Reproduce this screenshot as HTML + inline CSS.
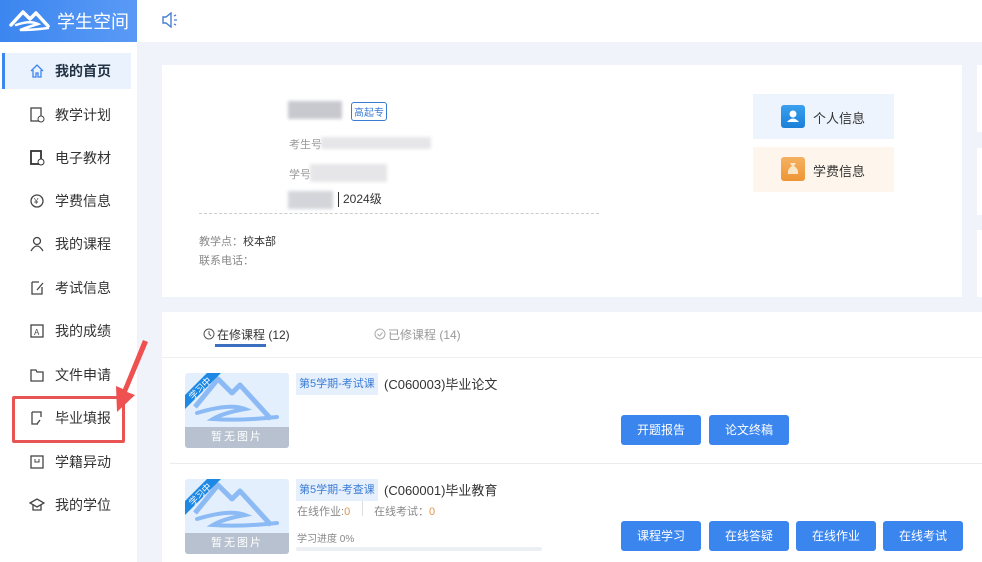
<!DOCTYPE html>
<html><head><meta charset="utf-8"><style>
*{margin:0;padding:0;box-sizing:border-box}
body{width:982px;height:562px;overflow:hidden;background:#f0f4fa;font-family:"Liberation Sans","Noto Sans CJK SC",sans-serif;position:relative;color:#333}
.abs{position:absolute}
.logo{left:0;top:0;width:137px;height:42px;background:linear-gradient(90deg,#3c86f0,#5a9af5);color:#fff;font-size:18px}
.top{left:137px;top:0;width:845px;height:42px;background:#fff}
.side{left:0;top:42px;width:137px;height:520px;background:#fff}
.nav{position:absolute;left:2px;width:129px;height:36px;font-size:14px;color:#333;display:flex;align-items:center}
.nav svg{position:absolute;left:27px;top:10px}
.nav span{position:absolute;left:53px;top:8px}
.nav.act{background:#eaf2fe;border-left:3px solid #3c86f0;color:#234;font-weight:bold}
.nav.act svg{left:24px}.nav.act span{left:50px}
.card{background:#fff}
.btn{position:absolute;width:80px;height:30px;background:#3a85ee;color:#fff;font-size:12px;border-radius:3px;text-align:center;line-height:30px}
.blur{background:#c8c9cf;filter:blur(1.5px)}
.thumb{position:absolute;width:104px;height:75px;background:#e3effd;border-radius:3px;overflow:hidden}
.thumb .ft{position:absolute;left:0;bottom:0;width:100%;height:21px;background:#b7c1cf;color:#fff;font-size:11px;text-align:center;line-height:21px;letter-spacing:2px}
.tag{position:absolute;background:#e6f0fd;color:#3a7bd5;font-size:11px;padding:0 3px;height:22px;line-height:22px}
.ttl{position:absolute;font-size:13px;color:#333}
.sm{position:absolute;font-size:11px;color:#888}
</style></head><body>
<div class="abs logo">
<svg class="abs" style="left:8px;top:7px" width="44" height="26" viewBox="0 0 44 26"><path d="M3 18 L15 5 L22 12 L28 6 L40 19" fill="none" stroke="#fff" stroke-width="3.5" stroke-linejoin="round" stroke-linecap="round"/><path d="M8 18 Q22 13 30 17 Q20 20 12 23 Q26 23 40 21" fill="none" stroke="#fff" stroke-width="2.5" stroke-linecap="round"/></svg>
<span class="abs" style="left:57px;top:8px">学生空间</span></div>
<div class="abs top"><svg class="abs" style="left:25px;top:12px" width="18" height="16" viewBox="0 0 18 16"><path d="M1 5h3l5-4v14l-5-4H1z" fill="none" stroke="#4a7fd0" stroke-width="1.4"/><path d="M12 4l2-1M12 8h3M12 12l2 1" stroke="#4a7fd0" stroke-width="1.3"/></svg></div>
<div class="abs side">
<div class="nav act" style="top:11px"><svg width="16" height="16" viewBox="0 0 16 16"><path d="M2 8L8 2l6 6M4 7v7h3v-4h2v4h3V7" fill="none" stroke="#3c86f0" stroke-width="1.3"/></svg><span>我的首页</span></div>
<div class="nav" style="top:55px"><svg width="16" height="16"><rect x="2" y="1" width="10" height="13" fill="none" stroke="#444" stroke-width="1.3"/><circle cx="12" cy="12" r="3" fill="#fff" stroke="#444"/></svg><span>教学计划</span></div>
<div class="nav" style="top:98px"><svg width="16" height="16"><rect x="2" y="1" width="10" height="13" fill="none" stroke="#333" stroke-width="1.8"/><circle cx="12" cy="12" r="3" fill="#fff" stroke="#333"/></svg><span>电子教材</span></div>
<div class="nav" style="top:141px"><svg width="16" height="16"><circle cx="8" cy="8" r="6" fill="none" stroke="#444" stroke-width="1.3"/><text x="5" y="11" font-size="8" fill="#444">¥</text></svg><span>学费信息</span></div>
<div class="nav" style="top:184px"><svg width="16" height="16"><circle cx="8" cy="5" r="3.5" fill="none" stroke="#444" stroke-width="1.3"/><path d="M2 15q6-10 12 0" fill="none" stroke="#444" stroke-width="1.3"/></svg><span>我的课程</span></div>
<div class="nav" style="top:228px"><svg width="16" height="16"><path d="M3 2h7M3 2v12h10V7M8 10l6-7" fill="none" stroke="#444" stroke-width="1.3"/></svg><span>考试信息</span></div>
<div class="nav" style="top:271px"><svg width="16" height="16"><rect x="2" y="2" width="12" height="12" fill="none" stroke="#444" stroke-width="1.3"/><text x="5" y="12" font-size="8" fill="#444">A</text></svg><span>我的成绩</span></div>
<div class="nav" style="top:315px"><svg width="16" height="16"><path d="M2 3h5l1 2h6v9H2z" fill="none" stroke="#444" stroke-width="1.3"/></svg><span>文件申请</span></div>
<div class="nav" style="top:358px"><svg width="16" height="16"><path d="M3 2h9v5M3 2v12h6M11 10l-3 4" fill="none" stroke="#444" stroke-width="1.3"/></svg><span>毕业填报</span></div>
<div class="nav" style="top:402px"><svg width="16" height="16"><rect x="2" y="2" width="12" height="12" fill="none" stroke="#444" stroke-width="1.3"/><path d="M6 5v3h4V5" fill="none" stroke="#444"/></svg><span>学籍异动</span></div>
<div class="nav" style="top:445px"><svg width="16" height="16"><path d="M1 6l7-4 7 4-7 4zM4 8v5h8V8" fill="none" stroke="#444" stroke-width="1.3"/></svg><span>我的学位</span></div>
</div>
<div class="abs" style="left:12px;top:396px;width:113px;height:47px;border:3px solid #e85454;border-radius:2px"></div>
<svg class="abs" style="left:105px;top:340px" width="50" height="80"><path d="M43 2 L22 52 L30 55 L12 72 L11 46 L18 49 L38 0Z" fill="#ef5050"/></svg>

<div class="abs card" style="left:162px;top:65px;width:800px;height:232px"></div>
<div class="abs blur" style="left:288px;top:101px;width:54px;height:18px"></div>
<div class="abs" style="left:351px;top:102px;border:1px solid #3a7bd5;color:#3a7bd5;font-size:10px;padding:1px 2px;border-radius:3px">高起专</div>
<div class="abs" style="left:289px;top:136px;font-size:11px;color:#999">考生号</div>
<div class="abs blur" style="left:321px;top:137px;width:110px;height:12px;background:#e6e6e8"></div>
<div class="abs" style="left:289px;top:166px;font-size:11px;color:#999">学号</div>
<div class="abs blur" style="left:310px;top:164px;width:77px;height:18px;background:#e6e6e8"></div>
<div class="abs blur" style="left:288px;top:191px;width:45px;height:18px;background:#d4d5da"></div>
<div class="abs" style="left:338px;top:192px;font-size:12px;color:#333;border-left:1px solid #333;padding-left:4px;line-height:15px">2024级</div>
<div class="abs" style="left:199px;top:213px;width:400px;border-top:1px dashed #ccc"></div>
<div class="abs" style="left:199px;top:233px;font-size:11px;color:#888">教学点：<span style="color:#333">校本部</span></div>
<div class="abs" style="left:199px;top:252px;font-size:11px;color:#888">联系电话：</div>
<div class="abs" style="left:753px;top:94px;width:141px;height:45px;background:#edf4fd"></div>
<div class="abs" style="left:781px;top:105px;width:24px;height:23px;border-radius:3px;background:linear-gradient(#3aa0ef,#1a7fd8)"><svg width="24" height="23"><circle cx="12" cy="9" r="3.5" fill="#fff"/><path d="M6 17q6-7 12 0z" fill="#fff"/></svg></div>
<div class="abs" style="left:813px;top:108px;font-size:13px">个人信息</div>
<div class="abs" style="left:753px;top:147px;width:141px;height:45px;background:#fef6ec"></div>
<div class="abs" style="left:781px;top:157px;width:24px;height:24px;border-radius:3px;background:linear-gradient(#f5b160,#ee9535)"><svg width="24" height="24"><path d="M9 6h6l-2 3q5 3 4 8H7q-1-5 4-8z" fill="#fce6c8"/></svg></div>
<div class="abs" style="left:813px;top:161px;font-size:13px">学费信息</div>
<div class="abs card" style="left:977px;top:65px;width:5px;height:67px"></div>
<div class="abs card" style="left:977px;top:148px;width:5px;height:67px"></div>
<div class="abs card" style="left:977px;top:230px;width:5px;height:67px"></div>

<div class="abs card" style="left:162px;top:312px;width:820px;height:250px"></div>
<svg class="abs" style="left:203px;top:328px" width="12" height="12"><circle cx="6" cy="6" r="5" fill="none" stroke="#555"/><path d="M6 3v3l2 2" fill="none" stroke="#555"/></svg>
<div class="abs" style="left:217px;top:326px;font-size:12px;color:#333">在修课程 (12)</div>
<div class="abs" style="left:215px;top:344px;width:51px;height:3px;background:#3a6fc0"></div>
<svg class="abs" style="left:374px;top:328px" width="12" height="12"><circle cx="6" cy="6" r="5" fill="none" stroke="#aaa"/><path d="M3.5 6l2 2 3-3.5" fill="none" stroke="#aaa"/></svg>
<div class="abs" style="left:388px;top:326px;font-size:12px;color:#999">已修课程 (14)</div>
<div class="abs" style="left:162px;top:357px;width:820px;border-top:1px solid #f0f0f0"></div>

<div class="thumb" style="left:185px;top:373px"><svg width="104" height="54"><path d="M10 34 L33 6 L47 20 L55 12 L86 46" fill="none" stroke="#8cbaf5" stroke-width="5" stroke-linejoin="round"/><path d="M12 40 Q45 30 60 36 Q38 40 28 46 Q55 48 92 44" fill="none" stroke="#8cbaf5" stroke-width="4" stroke-linecap="round"/><path d="M0 22 L22 0 L36 0 L0 36z" fill="#1e88e5"/><text x="4" y="22" font-size="9" fill="#fff" transform="rotate(-45 12 20)">学习中</text></svg><div class="ft">暂无图片</div></div>
<div class="tag" style="left:296px;top:373px">第5学期-考试课</div>
<div class="ttl" style="left:384px;top:374px">(C060003)毕业论文</div>
<div class="btn" style="left:621px;top:415px">开题报告</div>
<div class="btn" style="left:709px;top:415px">论文终稿</div>
<div class="abs" style="left:170px;top:463px;width:812px;border-top:1px solid #ececec"></div>

<div class="thumb" style="left:185px;top:479px"><svg width="104" height="54"><path d="M10 34 L33 6 L47 20 L55 12 L86 46" fill="none" stroke="#8cbaf5" stroke-width="5" stroke-linejoin="round"/><path d="M12 40 Q45 30 60 36 Q38 40 28 46 Q55 48 92 44" fill="none" stroke="#8cbaf5" stroke-width="4" stroke-linecap="round"/><path d="M0 22 L22 0 L36 0 L0 36z" fill="#1e88e5"/><text x="4" y="22" font-size="9" fill="#fff" transform="rotate(-45 12 20)">学习中</text></svg><div class="ft">暂无图片</div></div>
<div class="tag" style="left:296px;top:479px">第5学期-考查课</div>
<div class="ttl" style="left:384px;top:480px">(C060001)毕业教育</div>
<div class="sm" style="left:297px;top:503px">在线作业:<span style="color:#e0944a">0</span></div>
<div class="abs" style="left:362px;top:501px;height:15px;border-left:1px solid #ddd"></div>
<div class="sm" style="left:374px;top:503px">在线考试：<span style="color:#e0944a">0</span></div>
<div class="sm" style="left:297px;top:530px;font-size:10px">学习进度 0%</div>
<div class="abs" style="left:296px;top:547px;width:246px;height:4px;background:#ecf0f5;border-radius:2px"></div>
<div class="btn" style="left:621px;top:521px">课程学习</div>
<div class="btn" style="left:709px;top:521px">在线答疑</div>
<div class="btn" style="left:796px;top:521px">在线作业</div>
<div class="btn" style="left:883px;top:521px">在线考试</div>
</body></html>
